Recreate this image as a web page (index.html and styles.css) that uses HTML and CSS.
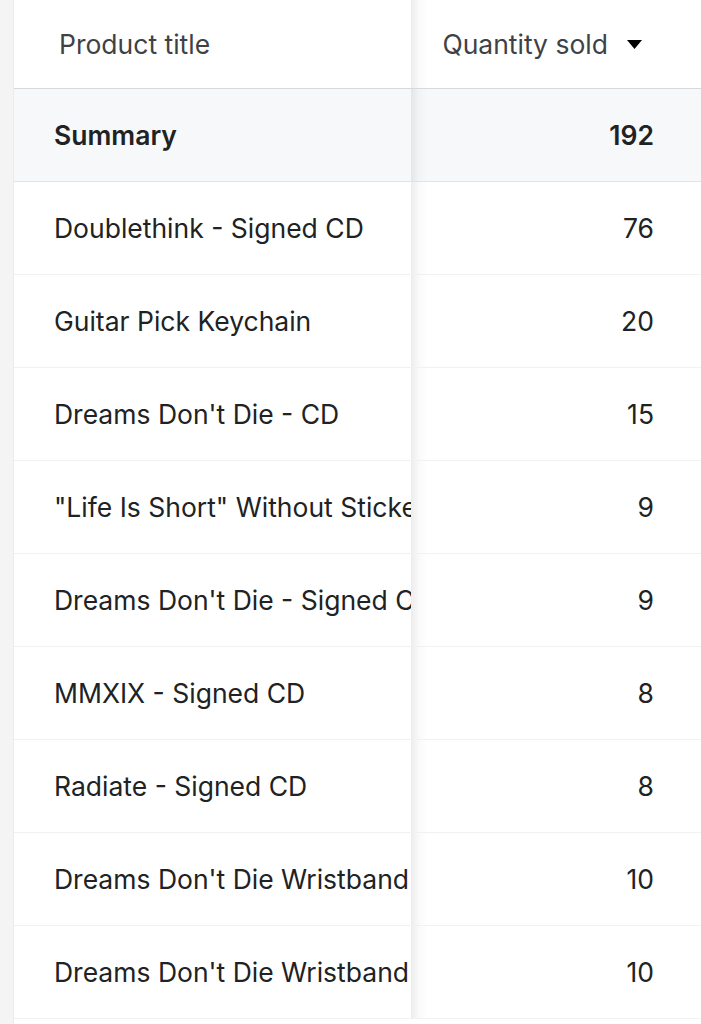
FILE: index.html
```html
<!DOCTYPE html>
<html lang="en">
<head>
<meta charset="utf-8">
<link rel="stylesheet" href="styles.css">
</head>
<body>
<div class="page">
  <div class="table">
    <div class="row head">
      <div class="cell first">Product title</div>
      <div class="cell num">Quantity sold
        <svg class="sort" width="15" height="9" viewBox="0 0 15 9"><polygon points="0,0 15,0 7.5,9" fill="#000"/></svg>
      </div>
    </div>
    <div class="row summary">
      <div class="cell first">Summary</div>
      <div class="cell num">192</div>
    </div>
    <div class="row"><div class="cell first">Doublethink - Signed CD</div><div class="cell num">76</div></div>
    <div class="row"><div class="cell first">Guitar Pick Keychain</div><div class="cell num">20</div></div>
    <div class="row"><div class="cell first">Dreams Don't Die - CD</div><div class="cell num">15</div></div>
    <div class="row"><div class="cell first">"Life Is Short" Without Stickers</div><div class="cell num">9</div></div>
    <div class="row"><div class="cell first">Dreams Don't Die - Signed CD</div><div class="cell num">9</div></div>
    <div class="row"><div class="cell first">MMXIX - Signed CD</div><div class="cell num">8</div></div>
    <div class="row"><div class="cell first">Radiate - Signed CD</div><div class="cell num">8</div></div>
    <div class="row"><div class="cell first">Dreams Don't Die Wristband</div><div class="cell num">10</div></div>
    <div class="row"><div class="cell first">Dreams Don't Die Wristband</div><div class="cell num">10</div></div>
  </div>
</div>
</body>
</html>
```

FILE: styles.css
```css
html, body {
  margin: 0;
  padding: 0;
  background: #f4f4f4;
}
body {
  font-family: Inter, "Noto Sans", sans-serif;
  color: #202223;
  height: 1024px;
  overflow: hidden;
}
.page {
  padding-left: 14px;
}
.table {
  background: #fff;
  min-height: 1024px;
  border-left: 1px solid #ececec;
  margin-left: -1px;
}
.row {
  display: grid;
  grid-template-columns: 397px 1fr;
  height: 93px;
  box-sizing: border-box;
  border-bottom: 1px solid #f1f1f1;
}
.row.head {
  height: 89px;
  border-bottom: 1px solid #d6d8da;
}
.row.summary {
  height: 93px;
  background: #f6f8fa;
  border-bottom: 1px solid #e1e3e5;
  font-weight: 600;
}
.cell {
  display: flex;
  align-items: center;
  font-size: 26.5px;
  white-space: nowrap;
  overflow: hidden;
}
.cell.first {
  padding-left: 40px;
}
.cell.num {
  justify-content: flex-end;
  padding-right: 47px;
  background: linear-gradient(to right, rgba(0, 0, 0, 0.075), rgba(0, 0, 0, 0.02) 8px, rgba(0, 0, 0, 0) 17px);
}
.head .cell {
  color: #3f4245;
  font-weight: 400;
}
.head .cell.first {
  padding-left: 45px;
}
.head .cell.num {
  padding-right: 59px;
  gap: 19px;
}
.sort {
  display: block;
  margin-top: 1px;
}
```
